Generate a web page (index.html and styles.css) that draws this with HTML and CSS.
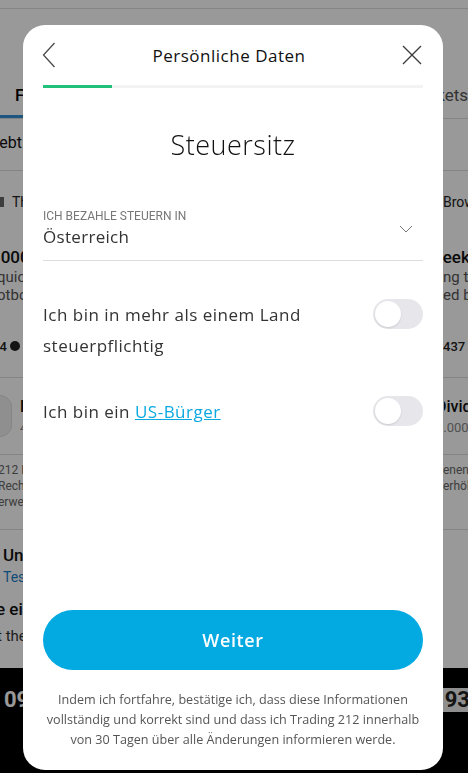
FILE: index.html
```html
<!DOCTYPE html>
<html lang="de">
<head>
  <meta charset="UTF-8">
  <title>Persönliche Daten</title>
  <link rel="stylesheet" href="styles.css">
</head>
<body>

<div class="page">
  <div class="topbar"></div>
  <div class="tabs">
    <span class="tab active">Favoriten</span>
    <span class="tab">Markets</span>
  </div>

  <div class="sec sec-title"><span>Beliebt</span></div>

  <div class="sec chips">
    <span class="chip"><i class="chip-ico"></i>Themen</span>
    <span class="r">Browse</span>
  </div>

  <div class="card">
    <div class="line big"><span>1000</span><span class="r">Weekly</span></div>
    <div class="line sub"><span>quick</span><span class="r">ng the</span></div>
    <div class="line sub"><span>otbot</span><span class="r">ed by</span></div>
    <div class="line stat"><span>24 <i class="dot"></i></span><span class="r">437</span></div>
  </div>

  <div class="sec item">
    <div class="item-left">
      <span class="item-ico"></span>
      <div>
        <div class="item-name">Div</div>
        <div class="item-val">4.0</div>
      </div>
    </div>
    <div class="item-right">
      <div class="item-name">Dividenden</div>
      <div class="item-val">4.000</div>
    </div>
  </div>

  <div class="sec notes">
    <div class="line note"><span>212 Ltd</span><span class="r">enen</span></div>
    <div class="line note"><span>Rechte</span><span class="r">erhöht</span></div>
    <div class="line note"><span>erweitert</span></div>
  </div>

  <div class="news">
    <div class="line big"><span>Unternehmen</span></div>
    <div class="line link"><span>Tesla</span></div>
    <div class="line big gap"><span>e ein</span></div>
    <div class="line sub tall"><span>t the</span></div>
  </div>

  <div class="ticker">
    <span class="tick">09</span>
    <span class="tick tick-box">93</span>
  </div>
</div>

<div class="overlay">
  <div class="modal">
    <div class="modal-head">
      <svg class="icon-back" width="14" height="26" viewBox="0 0 14 26">
        <path d="M12.5 1 L1.5 13 L12.5 25" fill="none" stroke="#4a4a4a" stroke-width="1.3"/>
      </svg>
      <span class="modal-title">Persönliche Daten</span>
      <svg class="icon-close" width="20" height="20" viewBox="0 0 20 20">
        <path d="M1 1 L19 19 M19 1 L1 19" fill="none" stroke="#3a3a3a" stroke-width="1.3"/>
      </svg>
    </div>
    <div class="progress"><div class="progress-done"></div></div>

    <h1 class="step-title">Steuersitz</h1>

    <div class="select">
      <div class="select-text">
        <div class="select-label">Ich bezahle Steuern in</div>
        <div class="select-value">Österreich</div>
      </div>
      <svg width="14" height="8" viewBox="0 0 14 8">
        <path d="M1 1 L7 7 L13 1" fill="none" stroke="#777" stroke-width="1"/>
      </svg>
    </div>

    <div class="option">
      <span class="option-text">Ich bin in mehr als einem Land steuerpflichtig</span>
      <span class="switch"></span>
    </div>

    <div class="option">
      <span class="option-text">Ich bin ein <a href="#">US-Bürger</a></span>
      <span class="switch"></span>
    </div>

    <div class="modal-foot">
      <button class="btn">Weiter</button>
      <p class="legal">Indem ich fortfahre, bestätige ich, dass diese Informationen vollständig und korrekt sind und dass ich Trading 212 innerhalb von 30 Tagen über alle Änderungen informieren werde.</p>
    </div>
  </div>
</div>

</body>
</html>
```

FILE: styles.css
```css
* {
  box-sizing: border-box;
}
body {
  margin: 0;
  font-family: Roboto, "Liberation Sans", sans-serif;
  background: #fff;
}

/* background page, dimmed by the overlay */
.page {
  height: 773px;
  overflow: hidden;
  color: #222;
}
.topbar {
  height: 9px;
  border-bottom: 1px solid #ddd;
}
.tabs {
  margin-top: 66px;
  height: 44px;
  display: flex;
  justify-content: space-between;
  border-bottom: 1px solid #ddd;
  font-size: 17px;
}
.tab {
  line-height: 40px;
  color: #555;
}
.tab.active {
  margin-left: -58px;
  padding-left: 73px;
  color: #000;
  font-weight: 500;
  border-bottom: 3px solid #2f8fd8;
}
.tabs .tab:last-child {
  width: 31px;
  overflow: hidden;
  direction: rtl;
}
.sec {
  border-bottom: 1px solid #ddd;
}
.sec-title {
  height: 52px;
  line-height: 48px;
  font-size: 16px;
  margin-left: -27px;
  color: #111;
}
.chips {
  height: 62px;
  display: flex;
  justify-content: space-between;
  align-items: center;
  font-size: 14px;
  border: none;
}
.chip-ico {
  display: inline-block;
  width: 4px;
  height: 10px;
  background: #666;
  margin-right: 8px;
}
.r {
  width: 25px;
  overflow: hidden;
  white-space: nowrap;
  text-align: left;
}
.line {
  display: flex;
  justify-content: space-between;
  white-space: nowrap;
}
.card {
  padding-top: 13px;
  height: 145px;
  border-bottom: 1px solid #ddd;
}
.big {
  font-size: 17px;
  font-weight: 500;
  line-height: 22px;
  color: #111;
}
.card .big span:first-child {
  margin-left: -9px;
}
.card .big .r {
  text-indent: -15px;
}
.sub {
  font-size: 15px;
  line-height: 18px;
  color: #555;
}
.card .sub span:first-child {
  margin-left: -3px;
}
.stat {
  margin-top: 33px;
  font-size: 13px;
  font-weight: 500;
  line-height: 20px;
}
.stat span:first-child {
  margin-left: -8px;
}
.dot {
  display: inline-block;
  width: 10px;
  height: 10px;
  border-radius: 50%;
  background: #222;
}
.item {
  height: 77px;
  display: flex;
  justify-content: space-between;
  align-items: center;
}
.item-left {
  display: flex;
  align-items: center;
  gap: 8px;
  margin-left: -30px;
}
.item-ico {
  width: 42px;
  height: 42px;
  border-radius: 12px;
  background: #eee;
  border: 1px solid #ddd;
}
.item-name {
  font-size: 16px;
  font-weight: 500;
  color: #111;
}
.item-val {
  font-size: 13px;
  color: #888;
  margin-top: 4px;
}
.item-right {
  width: 24px;
  overflow: hidden;
  white-space: nowrap;
  text-indent: -8px;
}
.notes {
  height: 75px;
  padding-top: 7px;
}
.note {
  font-size: 12px;
  line-height: 16px;
  color: #666;
}
.notes .note span:first-child {
  margin-left: -2px;
}
.news {
  padding-top: 14px;
  height: 138px;
}
.link {
  font-size: 14px;
  line-height: 22px;
  color: #1b7fc9;
  margin-left: 3px;
}
.news .big span:first-child {
  margin-left: 3px;
}
.gap {
  margin-top: 10px;
}
.news .gap span:first-child {
  margin-left: -4px;
}
.tall {
  margin-top: 6px;
  line-height: 20px;
  color: #333;
}
.news .tall span:first-child {
  margin-left: -3px;
}
.ticker {
  height: 105px;
  background: #000;
  display: flex;
  justify-content: space-between;
  padding-top: 20px;
}
.tick {
  font-size: 22px;
  font-weight: 700;
  color: #fff;
  line-height: 24px;
  height: 24px;
  margin-left: 4px;
}
.tick-box {
  background: #eee;
  color: #222;
  padding: 0 6px;
  margin-right: -8px;
  border-radius: 3px;
}

/* modal */
.overlay {
  position: fixed;
  inset: 0;
  background: rgba(0, 0, 0, 0.4);
  padding: 25px 0 0 23px;
}
.modal {
  width: 420px;
  height: 745px;
  background: #fff;
  border-radius: 22px;
  display: flex;
  flex-direction: column;
  font-family: "Open Sans", sans-serif;
  color: #333;
}
.modal-head {
  height: 60px;
  padding: 0 21px 0 19px;
  display: flex;
  align-items: center;
  justify-content: space-between;
}
.modal-title {
  font-size: 17px;
  letter-spacing: 0.5px;
  font-weight: 500;
  color: #111;
}
.progress {
  margin: 0 20px;
  height: 3px;
  background: #f3f3f3;
}
.progress-done {
  width: 69px;
  height: 3px;
  background: #21c17c;
}
.step-title {
  margin: 39px 0 0;
  text-align: center;
  font-size: 27px;
  letter-spacing: 0.5px;
  line-height: 36px;
  font-weight: 300;
  color: #111;
}
.select {
  margin: 46px 20px 0;
  padding-bottom: 12px;
  border-bottom: 1px solid #ddd;
  display: flex;
  align-items: center;
  justify-content: space-between;
}
.select svg {
  margin-right: 10px;
}
.select-label {
  font-family: Roboto, sans-serif;
  font-size: 12px;
  line-height: 14px;
  text-transform: uppercase;
  color: #777;
}
.select-value {
  margin-top: 3px;
  font-size: 17px;
  letter-spacing: 0.3px;
  line-height: 22px;
  color: #333;
}
.option {
  margin: 38px 20px 0;
  display: flex;
  justify-content: space-between;
  align-items: flex-start;
  gap: 20px;
}
.option + .option {
  margin-top: 35px;
}
.option-text {
  font-size: 17px;
  letter-spacing: 0.5px;
  line-height: 31px;
  color: #333;
  max-width: 300px;
}
.option-text a {
  color: #0ba9e0;
}
.switch {
  flex: none;
  width: 50px;
  height: 30px;
  border-radius: 15px;
  background: #e7e7eb;
  position: relative;
}
.switch::before {
  content: "";
  position: absolute;
  left: 2px;
  top: 2px;
  width: 26px;
  height: 26px;
  border-radius: 50%;
  background: #fff;
  box-shadow: 0 1px 2px rgba(0, 0, 0, 0.12);
}
.modal-foot {
  margin-top: auto;
  padding: 0 20px 20px;
}
.btn {
  display: block;
  width: 100%;
  height: 60px;
  border: none;
  border-radius: 30px;
  background: #03a9e1;
  color: #fff;
  font-family: "Open Sans", sans-serif;
  font-size: 18px;
  letter-spacing: 0.6px;
  font-weight: 600;
}
.legal {
  margin: 20px 0 0;
  text-align: center;
  font-size: 12.6px;
  line-height: 20px;
  color: #555;
}
```
